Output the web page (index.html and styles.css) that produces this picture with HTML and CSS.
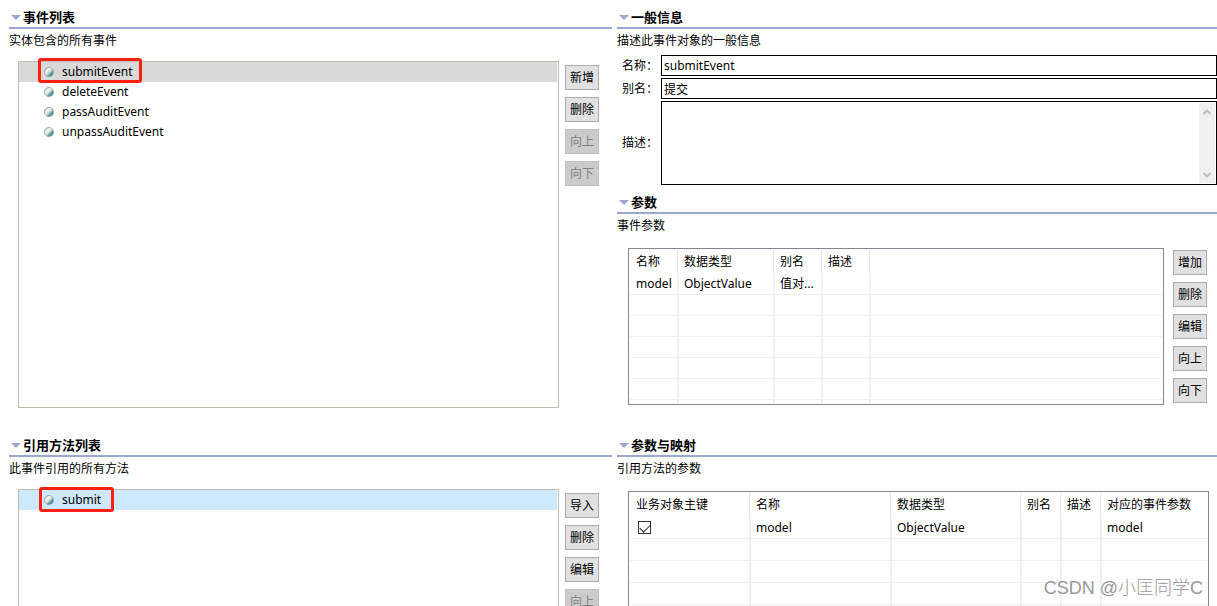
FILE: index.html
```html
<!DOCTYPE html>
<html lang="zh-CN">
<head>
<meta charset="utf-8">
<title>事件列表</title>
<link rel="stylesheet" href="styles.css">
</head>
<body>
<svg class="defs" aria-hidden="true">
  <defs>
    <linearGradient id="ball" x1="0.1" y1="0.1" x2="0.9" y2="0.9">
      <stop offset="0" stop-color="#a9c4b4"/>
      <stop offset="0.3" stop-color="#f4f8ee"/>
      <stop offset="0.55" stop-color="#c5d9d3"/>
      <stop offset="0.7" stop-color="#6fa5a6"/>
      <stop offset="1" stop-color="#2f6683"/>
    </linearGradient>
    <symbol id="dot" viewBox="0 0 10 10">
      <circle cx="5" cy="5" r="4.6" fill="url(#ball)" stroke="#86a7ac" stroke-width="0.8"/>
    </symbol>
    <symbol id="twist" viewBox="0 0 10 5"><path d="M0 0H10L5 5Z" fill="#99a8cc"/></symbol>
  </defs>
</svg>
<main class="editor">
  <section class="section">
    <h2 class="title"><svg class="twist"><use href="#twist"/></svg>事件列表</h2>
    <p class="desc">实体包含的所有事件</p>
    <div class="list-area">
      <ul class="list">
        <li class="item item-inactive"><span class="node marked"><svg class="dot"><use href="#dot"/></svg>submitEvent</span></li>
        <li class="item"><span class="node"><svg class="dot"><use href="#dot"/></svg>deleteEvent</span></li>
        <li class="item"><span class="node"><svg class="dot"><use href="#dot"/></svg>passAuditEvent</span></li>
        <li class="item"><span class="node"><svg class="dot"><use href="#dot"/></svg>unpassAuditEvent</span></li>
      </ul>
      <div class="buttons">
        <button class="btn">新增</button>
        <button class="btn">删除</button>
        <button class="btn" disabled>向上</button>
        <button class="btn" disabled>向下</button>
      </div>
    </div>
  </section>

  <div class="stack">
    <section class="section">
      <h2 class="title"><svg class="twist"><use href="#twist"/></svg>一般信息</h2>
      <p class="desc">描述此事件对象的一般信息</p>
      <form class="form">
        <label for="name">名称：</label>
        <input class="field" id="name" type="text" value="submitEvent">
        <label for="alias">别名：</label>
        <input class="field" id="alias" type="text" value="提交">
        <label for="note">描述：</label>
        <div class="memo">
          <textarea class="memo-text" id="note"></textarea>
          <div class="scroll">
            <svg class="arrow" viewBox="0 0 8 6"><path d="M0.5 5L4 1.5L7.5 5" fill="none" stroke="#bfbfbf" stroke-width="2"/></svg>
            <svg class="arrow" viewBox="0 0 8 6"><path d="M0.5 1L4 4.5L7.5 1" fill="none" stroke="#bfbfbf" stroke-width="2"/></svg>
          </div>
        </div>
      </form>
    </section>
    <section class="section">
      <h2 class="title"><svg class="twist"><use href="#twist"/></svg>参数</h2>
      <p class="desc">事件参数</p>
      <div class="table-area">
        <div class="frame">
          <table class="grid">
            <colgroup><col class="w49"><col class="w96"><col class="w48"><col class="w48"><col></colgroup>
            <thead><tr><th>名称</th><th>数据类型</th><th>别名</th><th>描述</th><th></th></tr></thead>
            <tbody>
              <tr><td>model</td><td>ObjectValue</td><td>值对...</td><td></td><td></td></tr>
              <tr><td></td><td></td><td></td><td></td><td></td></tr>
              <tr><td></td><td></td><td></td><td></td><td></td></tr>
              <tr><td></td><td></td><td></td><td></td><td></td></tr>
              <tr><td></td><td></td><td></td><td></td><td></td></tr>
              <tr><td></td><td></td><td></td><td></td><td></td></tr>
              <tr class="tail"><td></td><td></td><td></td><td></td><td></td></tr>
            </tbody>
          </table>
        </div>
        <div class="buttons buttons-table">
          <button class="btn">增加</button>
          <button class="btn">删除</button>
          <button class="btn">编辑</button>
          <button class="btn">向上</button>
          <button class="btn">向下</button>
        </div>
      </div>
    </section>
  </div>

  <section class="section">
    <h2 class="title"><svg class="twist"><use href="#twist"/></svg>引用方法列表</h2>
    <p class="desc">此事件引用的所有方法</p>
    <div class="list-area">
      <ul class="list">
        <li class="item item-active"><span class="node marked marked-wide"><svg class="dot"><use href="#dot"/></svg>submit</span></li>
      </ul>
      <div class="buttons">
        <button class="btn">导入</button>
        <button class="btn">删除</button>
        <button class="btn">编辑</button>
        <button class="btn" disabled>向上</button>
      </div>
    </div>
  </section>

  <section class="section">
    <h2 class="title"><svg class="twist"><use href="#twist"/></svg>参数与映射</h2>
    <p class="desc">引用方法的参数</p>
    <div class="table-area table-area-full">
      <div class="frame">
        <table class="grid grid-tall">
          <colgroup><col class="w121"><col class="w141"><col class="w130"><col class="w40"><col class="w40"><col></colgroup>
          <thead><tr><th>业务对象主键</th><th>名称</th><th>数据类型</th><th>别名</th><th>描述</th><th>对应的事件参数</th></tr></thead>
          <tbody>
            <tr><td><input class="check" type="checkbox" aria-label="业务对象主键" checked></td><td>model</td><td>ObjectValue</td><td></td><td></td><td>model</td></tr>
            <tr><td></td><td></td><td></td><td></td><td></td><td></td></tr>
            <tr><td></td><td></td><td></td><td></td><td></td><td></td></tr>
            <tr><td></td><td></td><td></td><td></td><td></td><td></td></tr>
            <tr><td></td><td></td><td></td><td></td><td></td><td></td></tr>
          </tbody>
        </table>
      </div>
    </div>
  </section>
</main>
<div class="watermark">CSDN @小匡同学C</div>
</body>
</html>
```

FILE: styles.css
```css
* { box-sizing: border-box; }

body {
  margin: 0;
  height: 100vh;
  overflow: hidden;
  background: #fff;
  color: #000;
  font: 12px/20px "Noto Sans", "Noto Sans CJK SC", sans-serif;
}

button, input, textarea { font: inherit; color: inherit; }

.defs { position: absolute; width: 0; height: 0; }

.editor {
  display: grid;
  grid-template-columns: 603fr 600fr;
  column-gap: 5px;
  padding-left: 9px;
}

.section { display: flex; flex-direction: column; min-width: 0; }
.stack { display: flex; flex-direction: column; min-width: 0; }

.title {
  display: flex;
  align-items: center;
  gap: 2px;
  margin: 0;
  padding: 7px 0 0 2px;
  border-bottom: 2px solid #99a8cc;
  font-size: 13px;
  line-height: 20px;
  font-weight: 700;
}
.twist { width: 10px; height: 5px; }

.desc { margin: 0; line-height: 24px; }

/* Lists */
.list-area { display: flex; flex: 1; gap: 6px; padding: 8px 13px 20px 9px; }
.list {
  flex: 1;
  margin: 0;
  padding: 0 1px 0 0;
  list-style: none;
  border: 1px solid #bfbeb1;
}
.item { height: 20px; padding-left: 25px; }
.item-inactive { background: #d9d9d9; }
.item-active { background: #cde8ff; }
.node { display: inline-flex; align-items: center; gap: 8px; height: 20px; }
.dot { width: 10px; height: 10px; }
.marked { position: relative; }
.marked::after {
  content: "";
  position: absolute;
  inset: -4px -10px -1px -6px;
  border: 3px solid #fb2010;
  border-radius: 3px;
}
.marked-wide::after { inset: -3px -13px -2px -5px; }

/* Buttons */
.buttons { display: flex; flex-direction: column; gap: 7px; padding-top: 4px; }
.buttons-table { padding-top: 2px; }
.btn {
  width: 34px;
  height: 25px;
  padding: 0;
  border: 1px solid #adadad;
  background: #e1e1e1;
}
.btn:disabled { border-color: #bfbfbf; background: #ccc; color: #838383; }

/* Form */
.form {
  display: grid;
  grid-template-columns: 39px 1fr;
  gap: 2px 0;
  align-items: center;
  padding: 2px 0 0 5px;
}
.field {
  width: 100%;
  height: 21px;
  padding: 0 2px;
  border: 1px solid #000;
  background: #fff;
}
.memo { display: flex; height: 84px; padding: 1px; border: 1px solid #000; }
.memo-text { flex: 1; padding: 0 1px; border: 0; resize: none; outline: 0; overflow: hidden; }
.scroll {
  display: flex;
  flex-direction: column;
  justify-content: space-between;
  align-items: center;
  width: 16px;
  padding: 6px 0 5px;
  background: #f0f0f0;
}
.arrow { width: 8px; height: 6px; }

/* Tables */
.table-area { display: flex; gap: 9px; padding: 10px 10px 23px 11px; }
.table-area-full { padding-right: 8px; }
.frame { flex: 1; min-width: 0; padding: 1px; border: 1px solid #828790; }
.grid { width: 100%; table-layout: fixed; border-collapse: separate; border-spacing: 0; }
.grid th, .grid td {
  padding: 0 0 0 5px;
  text-align: left;
  font-weight: 400;
  line-height: 20px;
  white-space: nowrap;
  overflow: hidden;
}
.grid th { height: 24px; background: linear-gradient(#e5e5e5, #e5e5e5) right 1px top 0 / 1px 100% no-repeat; }
.grid td { height: 21px; border-bottom: 1px solid #efefef; border-right: 2px solid #f0f1f8; }
.grid th:last-child { background: none; }
.grid td:last-child { border-right: 0; }
.grid .tail td { height: 3px; border-bottom: 0; line-height: 0; }
.grid th:first-child, .grid td:first-child { padding-left: 6px; }
.grid-tall td { height: 22px; border-right-color: #e9f0fb; }

.w40 { width: 40px; }
.w48 { width: 48px; }
.w49 { width: 49px; }
.w96 { width: 96px; }
.w121 { width: 121px; }
.w130 { width: 130px; }
.w141 { width: 141px; }

.check {
  appearance: none;
  display: block;
  width: 13px;
  height: 13px;
  margin: 0 2px;
  border: 1px solid #333;
  background: #fff;
}
.check:checked::before {
  content: "";
  display: block;
  width: 9px;
  height: 5px;
  margin: 2px 1px;
  border: solid #333;
  border-width: 0 0 1px 1px;
  transform: rotate(-45deg);
}

.watermark {
  position: absolute;
  right: 14px;
  bottom: 6px;
  color: #999;
  font: 300 18px/24px "Liberation Sans", "Noto Sans CJK SC", sans-serif;
  text-shadow: 1px 1px 0 #fff;
}
```
